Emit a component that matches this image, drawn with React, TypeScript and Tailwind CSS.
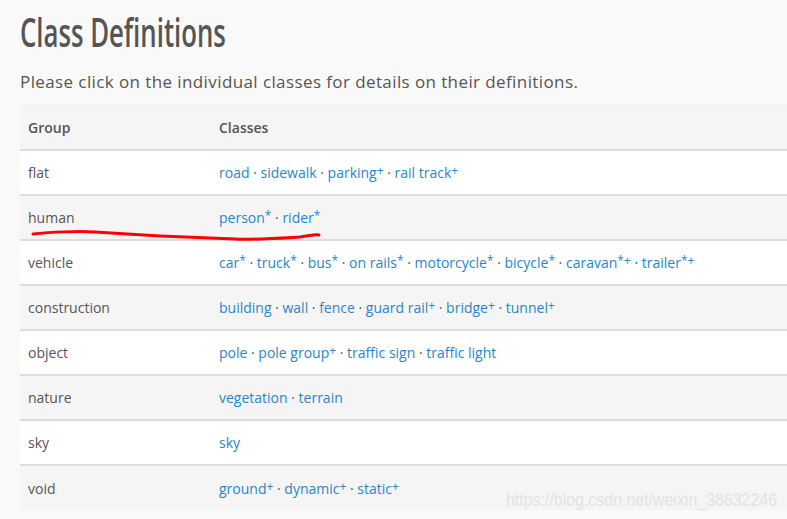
import React from "react";

type Item = { name: string; sup?: string };

const rows: { group: string; items: Item[] }[] = [
  { group: "flat", items: [{ name: "road" }, { name: "sidewalk" }, { name: "parking", sup: "+" }, { name: "rail track", sup: "+" }] },
  { group: "human", items: [{ name: "person", sup: "*" }, { name: "rider", sup: "*" }] },
  {
    group: "vehicle",
    items: [
      { name: "car", sup: "*" },
      { name: "truck", sup: "*" },
      { name: "bus", sup: "*" },
      { name: "on rails", sup: "*" },
      { name: "motorcycle", sup: "*" },
      { name: "bicycle", sup: "*" },
      { name: "caravan", sup: "*+" },
      { name: "trailer", sup: "*+" },
    ],
  },
  {
    group: "construction",
    items: [
      { name: "building" },
      { name: "wall" },
      { name: "fence" },
      { name: "guard rail", sup: "+" },
      { name: "bridge", sup: "+" },
      { name: "tunnel", sup: "+" },
    ],
  },
  { group: "object", items: [{ name: "pole" }, { name: "pole group", sup: "+" }, { name: "traffic sign" }, { name: "traffic light" }] },
  { group: "nature", items: [{ name: "vegetation" }, { name: "terrain" }] },
  { group: "sky", items: [{ name: "sky" }] },
  { group: "void", items: [{ name: "ground", sup: "+" }, { name: "dynamic", sup: "+" }, { name: "static", sup: "+" }] },
];

export default function App() {
  return (
    <div className="relative w-[787px] h-[519px] overflow-hidden bg-[#f9f9f9] text-[#555]" style={{ fontFamily: '"Open Sans", sans-serif' }}>
      <div className="pl-[20px] pt-[10px]">
        <h1 className="h-[44px] text-[39px] leading-[44px] text-[#555] font-semibold">
          <span className="inline-block origin-left scale-x-[0.66] whitespace-nowrap">Class Definitions</span>
        </h1>
        <p className="mt-[16px] text-[17px] leading-[24px] tracking-[0.4px] text-[#555]">
          Please click on the individual classes for details on their definitions.
        </p>
        <table className="mt-[11px] w-[780px] border-collapse text-[14px] text-left">
          <thead>
            <tr className="bg-[#f5f5f5] h-[45px]">
              <th className="w-[199px] pl-[8px] font-semibold text-[#555]">Group</th>
              <th className="pl-0 font-semibold text-[#555]">Classes</th>
            </tr>
          </thead>
          <tbody>
            {rows.map((r, i) => (
              <tr key={r.group} className={`h-[45px] border-t-2 border-[#ddd] ${i % 2 === 0 ? "bg-white" : "bg-[#f5f5f5]"}`}>
                <td className="pl-[8px] text-[#555]">{r.group}</td>
                <td className="text-[#2a85c8]">
                  {r.items.map((it, j) => (
                    <React.Fragment key={it.name}>
                      {j > 0 && <span className="text-[#555]"> · </span>}
                      <span>{it.name}</span>
                      {it.sup && <sup className="text-[12px] relative -top-[3px]">{it.sup}</sup>}
                    </React.Fragment>
                  ))}
                </td>
              </tr>
            ))}
          </tbody>
        </table>
      </div>
      <svg className="absolute left-0 top-0 pointer-events-none" width="787" height="519">
        <path
          d="M33 234 C 50 232, 80 231, 95 232 C 110 233, 130 234, 160 236 C 190 237, 215 238, 235 239 C 250 240, 265 239, 300 237 C 310 236, 314 234, 319 235"
          stroke="#ff0000"
          strokeWidth="3"
          fill="none"
          strokeLinecap="round"
        />
      </svg>
      <div
        className="absolute left-[506px] top-[489px] text-[18px] leading-[22px] text-[#e3e3e3] whitespace-nowrap"
        style={{ fontFamily: '"Liberation Sans", sans-serif' }}
      >
        <span className="inline-block origin-left scale-x-[0.885]">https://blog.csdn.net/weixin_38632246</span>
      </div>
    </div>
  );
}
